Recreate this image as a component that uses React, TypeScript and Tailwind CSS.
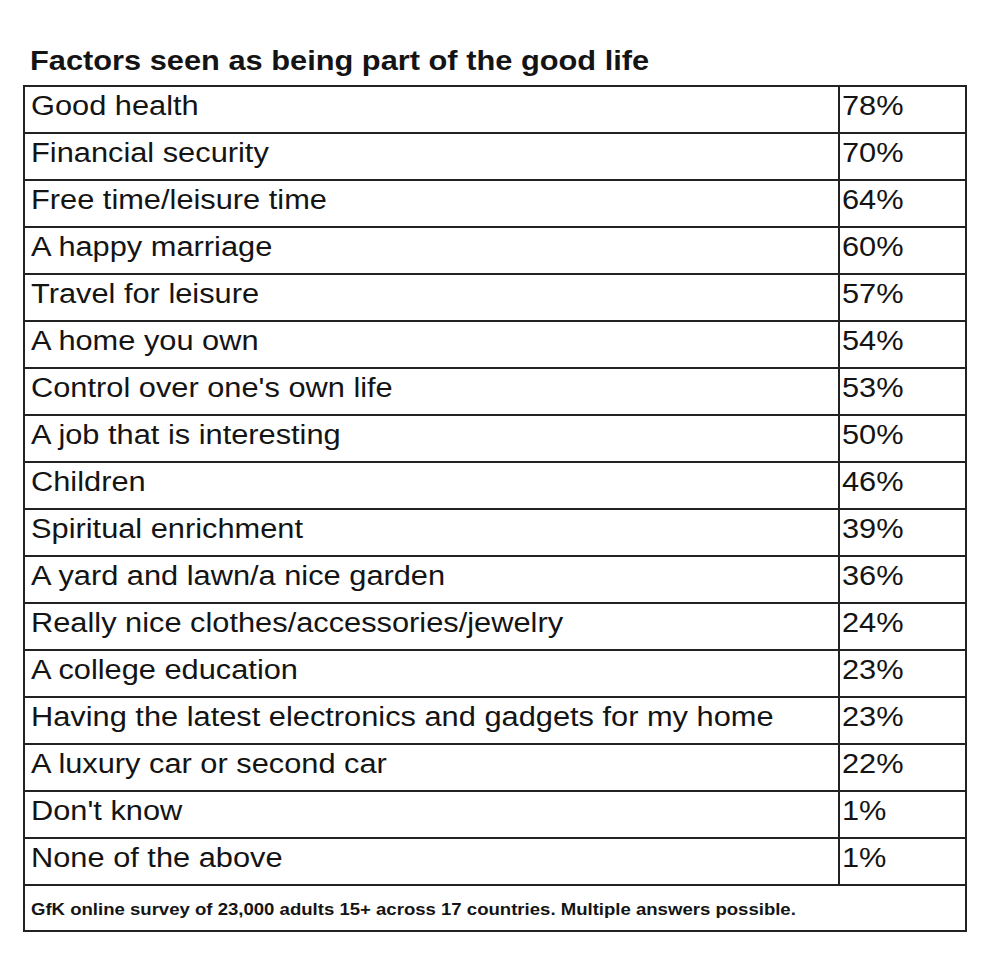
const rows: [string, string][] = [
  ["Good health", "78%"],
  ["Financial security", "70%"],
  ["Free time/leisure time", "64%"],
  ["A happy marriage", "60%"],
  ["Travel for leisure", "57%"],
  ["A home you own", "54%"],
  ["Control over one's own life", "53%"],
  ["A job that is interesting", "50%"],
  ["Children", "46%"],
  ["Spiritual enrichment", "39%"],
  ["A yard and lawn/a nice garden", "36%"],
  ["Really nice clothes/accessories/jewelry", "24%"],
  ["A college education", "23%"],
  ["Having the latest electronics and gadgets for my home", "23%"],
  ["A luxury car or second car", "22%"],
  ["Don't know", "1%"],
  ["None of the above", "1%"],
];

// the source is slightly stretched horizontally
const Wide = ({ children, s = "scale-x-[1.14]" }: { children: React.ReactNode; s?: string }) => (
  <span className={`inline-block origin-left whitespace-nowrap ${s}`}>{children}</span>
);

export default function App() {
  return (
    <div className="w-[999px] h-[960px] bg-white text-[#141414] font-['Liberation_Sans',Arial,sans-serif]">
      <div className="pl-[30px] pt-[43px]">
        <h1 className="text-[27px] leading-[36px] font-bold">
          <Wide>Factors seen as being part of the good life</Wide>
        </h1>
      </div>
      <div className="ml-[23px] mt-[6px] w-[944px] border-2 border-[#222]">
        {rows.map(([label, pct]) => (
          <div key={label} className="grid grid-cols-[815px_1fr] h-[47px] border-b-2 border-[#222] text-[27px] leading-[38px]">
            <div className="pl-[6px] border-r-2 border-[#222]">
              <Wide>{label}</Wide>
            </div>
            <div className="pl-[2px]">
              <Wide>{pct}</Wide>
            </div>
          </div>
        ))}
        <div className="h-[44px] pl-[6px] pt-[14px] text-[16px] leading-[20px] font-bold">
          <Wide s="scale-x-[1.16]">GfK online survey of 23,000 adults 15+ across 17 countries. Multiple answers possible.</Wide>
        </div>
      </div>
    </div>
  );
}
